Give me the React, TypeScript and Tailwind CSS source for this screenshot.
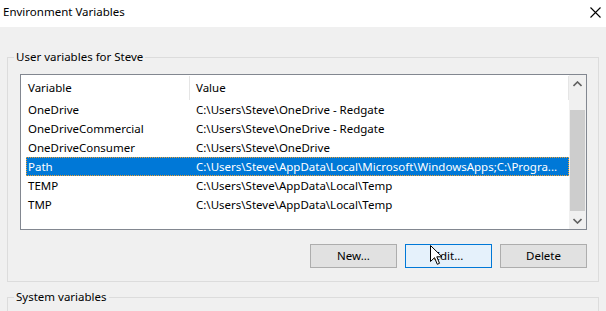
import React from 'react';

type EnvVar = { name: string; value: string };

const userVars: EnvVar[] = [
  { name: 'OneDrive', value: 'C:\\Users\\Steve\\OneDrive - Redgate' },
  { name: 'OneDriveCommercial', value: 'C:\\Users\\Steve\\OneDrive - Redgate' },
  { name: 'OneDriveConsumer', value: 'C:\\Users\\Steve\\OneDrive' },
  { name: 'Path', value: 'C:\\Users\\Steve\\AppData\\Local\\Microsoft\\WindowsApps;C:\\Progra...' },
  { name: 'TEMP', value: 'C:\\Users\\Steve\\AppData\\Local\\Temp' },
  { name: 'TMP', value: 'C:\\Users\\Steve\\AppData\\Local\\Temp' },
];

const selected = 'Path';

function Chevron({ up }: { up?: boolean }) {
  return (
    <svg width="9" height="6" viewBox="0 0 9 6" className="block">
      <path d={up ? 'M0.5 5 L4.5 1 L8.5 5' : 'M0.5 1 L4.5 5 L8.5 1'} fill="none" stroke="#606060" strokeWidth="1.6" />
    </svg>
  );
}

function Cursor() {
  return (
    <svg width="13" height="21" viewBox="0 0 13 21" className="absolute left-[430px] top-[245px]">
      <path d="M0.5 0.5 L0.5 16.5 L4.5 12.7 L7.3 19.3 L9.5 18.3 L6.8 11.8 L12 11.8 Z" fill="#fff" stroke="#000" strokeWidth="1" strokeLinejoin="round" />
    </svg>
  );
}

function Button({ label, active }: { label: string; active?: boolean }) {
  return (
    <button
      className={
        active
          ? 'w-[87px] h-[24px] border border-[#0078d7] bg-[#e5f1fb] text-black'
          : 'w-[87px] h-[24px] border border-[#adadad] bg-[#e1e1e1] text-black'
      }
    >
      {label}
    </button>
  );
}

export default function App() {
  return (
    <div className="relative w-[606px] h-[311px] overflow-hidden bg-[#f0f0f0] font-['Noto_Sans',sans-serif] text-[11.5px] leading-[16px] text-black">
      {/* title bar */}
      <div className="h-[27px] bg-white flex items-center justify-between pl-[3px] pr-[5px]">
        <span className="-mt-[3px]">Environment Variables</span>
        <svg width="11" height="11" viewBox="0 0 11 11" className="-mt-[3px]">
          <path d="M0.5 0.5 L10.5 10.5 M10.5 0.5 L0.5 10.5" stroke="#000" strokeWidth="1.1" />
        </svg>
      </div>

      <fieldset className="ml-[7px] mt-[22px] w-[592px] border border-[#dcdcdc] pl-[12px] pr-[11px] pt-[9px] pb-[13px]">
        <legend className="-ml-[6px] px-[2px]">User variables for Steve</legend>

        <div className="h-[156px] border border-[#828790] bg-white flex">
          <div className="flex-1 flex flex-col">
            <div className="h-[25px] flex items-center">
              <div className="w-[169px] h-[24px] border-r border-[#e5e5e5] pl-[7px] flex items-center">Variable</div>
              <div className="flex-1 h-[24px] border-r border-[#e5e5e5] pl-[6px] flex items-center">Value</div>
            </div>
            {userVars.map((v) => {
              const sel = v.name === selected;
              return (
                <div
                  key={v.name}
                  className={
                    sel
                      ? 'ml-[5px] h-[19px] flex items-center bg-[#0078d7] text-white border border-dotted border-[#f0a030]'
                      : 'ml-[5px] h-[19px] flex items-center border border-transparent'
                  }
                >
                  <div className="w-[169px] pl-[1px] whitespace-nowrap">{v.name}</div>
                  <div className="flex-1 whitespace-nowrap overflow-hidden">{v.value}</div>
                </div>
              );
            })}
          </div>
          <div className="w-[17px] bg-[#f0f0f0] flex flex-col">
            <div className="h-[17px] flex items-center justify-center">
              <Chevron up />
            </div>
            <div className="h-[18px]" />
            <div className="h-[101px] mx-[1px] bg-[#cdcdcd]" />
            <div className="flex-1" />
            <div className="h-[17px] flex items-center justify-center">
              <Chevron />
            </div>
          </div>
        </div>

        <div className="mt-[14px] flex justify-end gap-[8px]">
          <Button label="New..." />
          <Button label="Edit..." active />
          <Button label="Delete" />
        </div>
      </fieldset>

      <fieldset className="ml-[7px] mt-[7px] w-[592px] h-[80px] border border-[#dcdcdc] pl-[12px]">
        <legend className="-ml-[6px] px-[2px]">System variables</legend>
      </fieldset>

      <Cursor />
    </div>
  );
}
